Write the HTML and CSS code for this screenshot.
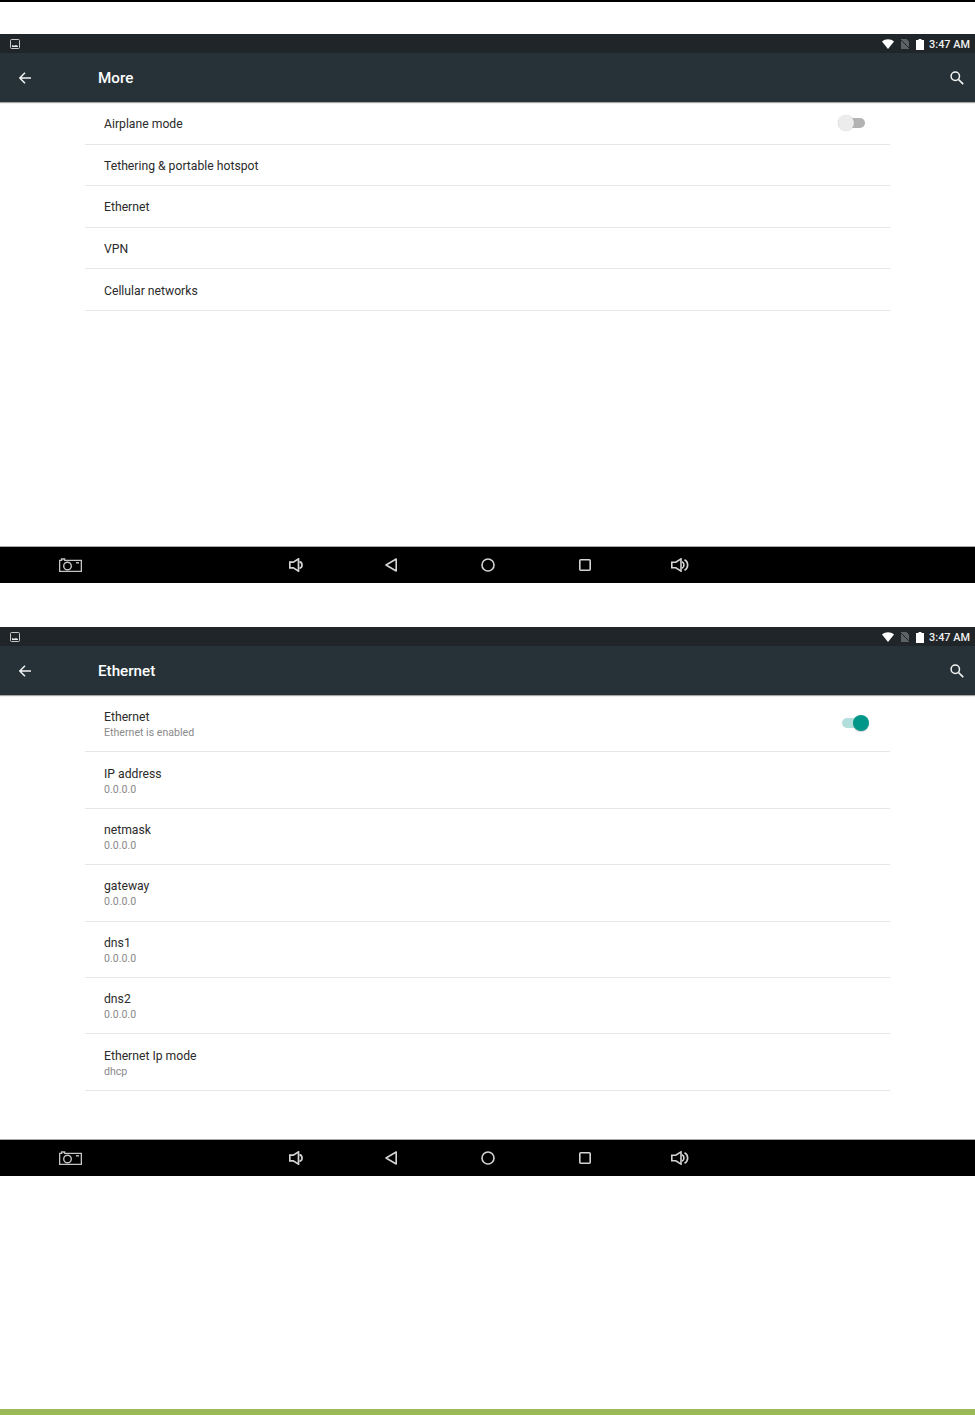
FILE: index.html
```html
<!DOCTYPE html>
<html lang="en">
<head>
    <meta charset="UTF-8">
    <meta name="viewport" content="width=device-width, initial-scale=1.0">
    <title>More and Ethernet settings</title>
    <link rel="stylesheet" href="styles.css">
</head>
<body>
    <div class="top-rule"></div>

    <!-- More screen -->
    <section class="screen">
        <div class="status-bar">
            <svg class="status-pic" viewBox="0 0 10 10"><rect x="0.5" y="0.5" width="9" height="9" rx="1" fill="#1f2528" stroke="#c8c8c8"/><path d="M2 8V6l2 .8L6 6l2 1v1z" fill="#e8e8e8"/></svg>
            <svg class="status-wifi" viewBox="0 0 12 10"><path d="M0 2.6C3.5-.6 8.500-.6 12 2.600L6 10z" fill="#fff"/></svg>
            <svg class="status-sim" viewBox="0 0 8 10"><path d="M0 0h5.500L8 2.500V10H0z" fill="#5c6366"/><path d="M0 1l8 8" stroke="#1f2528"/></svg>
            <svg class="status-battery" viewBox="0 0 8 11"><path d="M2.500 0h3v1H8v10H0V1h2.500z" fill="#fff"/></svg>
            <span class="status-time">3:47 AM</span>
        </div>
        <header class="toolbar">
            <svg class="toolbar-back" viewBox="0 0 12 12"><path d="M12 6H1.200M6 .8L.8 6 6 11.200" fill="none" stroke="#f2f4f4" stroke-width="1.500"/></svg>
            <h1 class="toolbar-title">More</h1>
            <svg class="toolbar-search" viewBox="0 0 14 14"><circle cx="5.300" cy="5.300" r="4.200" fill="none" stroke="#f2f4f4" stroke-width="1.500"/><path d="M8.500 8.500L13.200 13.200" stroke="#f2f4f4" stroke-width="1.700"/></svg>
        </header>
        <ul class="settings-list">
            <li class="row row-single">
                <span class="row-title">Airplane mode</span>
                <span class="switch switch-off"><span class="switch-thumb"></span></span>
            </li>
            <li class="row row-single"><span class="row-title">Tethering &amp; portable hotspot</span></li>
            <li class="row row-single"><span class="row-title">Ethernet</span></li>
            <li class="row row-single"><span class="row-title">VPN</span></li>
            <li class="row row-single"><span class="row-title">Cellular networks</span></li>
        </ul>
        <nav class="nav-bar">
            <svg class="nav-camera" viewBox="0 0 23 14"><path d="M.6 13.400V2.400h2V1h3v1.400h16.800v11z" fill="none" stroke="#c4c4c4" stroke-width="1.400"/><circle cx="8.500" cy="8" r="3.800" fill="none" stroke="#c4c4c4" stroke-width="1.400"/><path d="M17 4.800h3" stroke="#c4c4c4" stroke-width="1.400"/></svg>
            <svg class="nav-vol-down" viewBox="0 0 15 14"><path d="M.8 4.200h3.500L9.500.9v12.200L4.300 9.800H.8z" fill="none" stroke="#d4d4d4" stroke-width="1.700"/><path d="M10.500 3.600c3.400 1 3.400 5.800 0 6.800" fill="none" stroke="#d4d4d4" stroke-width="1.700"/></svg>
            <svg class="nav-back" viewBox="0 0 12 14"><path d="M11.200 1v12L1 7z" fill="none" stroke="#d4d4d4" stroke-width="1.600" stroke-linejoin="round"/></svg>
            <svg class="nav-home" viewBox="0 0 14 14"><circle cx="7" cy="7" r="6" fill="none" stroke="#d4d4d4" stroke-width="1.600"/></svg>
            <svg class="nav-recent" viewBox="0 0 12 12"><rect x=".8" y=".8" width="10.400" height="10.400" rx="1" fill="none" stroke="#d4d4d4" stroke-width="1.600"/></svg>
            <svg class="nav-vol-up" viewBox="0 0 18 14"><path d="M.8 4.200h4L10 .9v12.200L4.800 9.800h-4z" fill="none" stroke="#d4d4d4" stroke-width="1.600"/><path d="M11 3.800c2.600 1 2.600 5.400 0 6.400M13.500 1.800c4.200 2 4.200 8.400 0 10.400" fill="none" stroke="#d4d4d4" stroke-width="1.600"/></svg>
        </nav>
    </section>

    <!-- Ethernet screen -->
    <section class="screen screen-second">
        <div class="status-bar">
            <svg class="status-pic" viewBox="0 0 10 10"><rect x="0.5" y="0.5" width="9" height="9" rx="1" fill="#1f2528" stroke="#c8c8c8"/><path d="M2 8V6l2 .8L6 6l2 1v1z" fill="#e8e8e8"/></svg>
            <svg class="status-wifi" viewBox="0 0 12 10"><path d="M0 2.6C3.5-.6 8.500-.6 12 2.600L6 10z" fill="#fff"/></svg>
            <svg class="status-sim" viewBox="0 0 8 10"><path d="M0 0h5.500L8 2.500V10H0z" fill="#5c6366"/><path d="M0 1l8 8" stroke="#1f2528"/></svg>
            <svg class="status-battery" viewBox="0 0 8 11"><path d="M2.500 0h3v1H8v10H0V1h2.500z" fill="#fff"/></svg>
            <span class="status-time">3:47 AM</span>
        </div>
        <header class="toolbar">
            <svg class="toolbar-back" viewBox="0 0 12 12"><path d="M12 6H1.200M6 .8L.8 6 6 11.200" fill="none" stroke="#f2f4f4" stroke-width="1.500"/></svg>
            <h1 class="toolbar-title">Ethernet</h1>
            <svg class="toolbar-search" viewBox="0 0 14 14"><circle cx="5.300" cy="5.300" r="4.200" fill="none" stroke="#f2f4f4" stroke-width="1.500"/><path d="M8.500 8.500L13.200 13.200" stroke="#f2f4f4" stroke-width="1.700"/></svg>
        </header>
        <ul class="settings-list">
            <li class="row row-double">
                <div class="row-text">
                    <span class="row-title">Ethernet</span>
                    <span class="row-sub">Ethernet is enabled</span>
                </div>
                <span class="switch switch-on"><span class="switch-thumb"></span></span>
            </li>
            <li class="row row-double">
                <div class="row-text"><span class="row-title">IP address</span><span class="row-sub">0.0.0.0</span></div>
            </li>
            <li class="row row-double">
                <div class="row-text"><span class="row-title">netmask</span><span class="row-sub">0.0.0.0</span></div>
            </li>
            <li class="row row-double">
                <div class="row-text"><span class="row-title">gateway</span><span class="row-sub">0.0.0.0</span></div>
            </li>
            <li class="row row-double">
                <div class="row-text"><span class="row-title">dns1</span><span class="row-sub">0.0.0.0</span></div>
            </li>
            <li class="row row-double">
                <div class="row-text"><span class="row-title">dns2</span><span class="row-sub">0.0.0.0</span></div>
            </li>
            <li class="row row-double">
                <div class="row-text"><span class="row-title">Ethernet Ip mode</span><span class="row-sub">dhcp</span></div>
            </li>
        </ul>
        <nav class="nav-bar">
            <svg class="nav-camera" viewBox="0 0 23 14"><path d="M.6 13.400V2.400h2V1h3v1.400h16.800v11z" fill="none" stroke="#c4c4c4" stroke-width="1.400"/><circle cx="8.500" cy="8" r="3.800" fill="none" stroke="#c4c4c4" stroke-width="1.400"/><path d="M17 4.800h3" stroke="#c4c4c4" stroke-width="1.400"/></svg>
            <svg class="nav-vol-down" viewBox="0 0 15 14"><path d="M.8 4.200h3.500L9.500.9v12.200L4.300 9.800H.8z" fill="none" stroke="#d4d4d4" stroke-width="1.700"/><path d="M10.500 3.600c3.400 1 3.400 5.800 0 6.800" fill="none" stroke="#d4d4d4" stroke-width="1.700"/></svg>
            <svg class="nav-back" viewBox="0 0 12 14"><path d="M11.200 1v12L1 7z" fill="none" stroke="#d4d4d4" stroke-width="1.600" stroke-linejoin="round"/></svg>
            <svg class="nav-home" viewBox="0 0 14 14"><circle cx="7" cy="7" r="6" fill="none" stroke="#d4d4d4" stroke-width="1.600"/></svg>
            <svg class="nav-recent" viewBox="0 0 12 12"><rect x=".8" y=".8" width="10.400" height="10.400" rx="1" fill="none" stroke="#d4d4d4" stroke-width="1.600"/></svg>
            <svg class="nav-vol-up" viewBox="0 0 18 14"><path d="M.8 4.200h4L10 .9v12.200L4.800 9.800h-4z" fill="none" stroke="#d4d4d4" stroke-width="1.600"/><path d="M11 3.800c2.600 1 2.600 5.400 0 6.400M13.500 1.800c4.200 2 4.200 8.400 0 10.400" fill="none" stroke="#d4d4d4" stroke-width="1.600"/></svg>
        </nav>
    </section>

    <div class="bottom-rule"></div>
</body>
</html>
```

FILE: styles.css
```css
* {
    box-sizing: border-box;
}
html, body {
    margin: 0;
    padding: 0;
}
body {
    display: flex;
    flex-direction: column;
    height: 1415px;
    background: #fff;
    font-family: Roboto, "Liberation Sans", sans-serif;
    overflow: hidden;
}
.top-rule {
    height: 2px;
    background: #000;
}
.bottom-rule {
    height: 6px;
    margin-top: auto;
    background: #9bb957;
}

.screen {
    display: flex;
    flex-direction: column;
    height: 549px;
    margin-top: 32px;
}
.screen-second {
    margin-top: 44px;
}

/* status bar */
.status-bar {
    display: flex;
    align-items: center;
    height: 19px;
    padding: 1px 5px 0 10px;
    background: #1f2528;
    flex-shrink: 0;
}
.status-pic {
    width: 10px;
    height: 10px;
    margin-right: auto;
}
.status-wifi {
    width: 12px;
    height: 10px;
}
.status-sim {
    width: 8px;
    height: 10px;
    margin-left: 7px;
}
.status-battery {
    width: 8px;
    height: 11px;
    margin-left: 7px;
}
.status-time {
    margin-left: 5px;
    color: #f0f0f0;
    font-size: 10.9px;
    font-weight: 500;
}

/* toolbar */
.toolbar {
    display: flex;
    align-items: center;
    height: 49px;
    padding: 1px 12px 0 19px;
    background: #263238;
    box-shadow: 0 1px 1px rgba(0, 0, 0, 0.35);
    flex-shrink: 0;
}
.toolbar-back {
    width: 12px;
    height: 12px;
}
.toolbar-title {
    margin: 0 auto 0 67px;
    color: #fff;
    font-size: 15.2px;
    font-weight: 500;
}
.toolbar-search {
    width: 14px;
    height: 14px;
    margin-right: -1px;
}

/* list */
.settings-list {
    flex: 1;
    margin: 0 85px;
    padding: 1px 0 0;
    list-style: none;
}
.row {
    display: flex;
    align-items: center;
    justify-content: space-between;
    padding: 0 19px;
    border-bottom: 1px solid #e6e6e6;
}
.row-single {
    height: 41.6px;
    padding-top: 3px;
}
.row-double {
    height: 56.4px;
    padding-top: 2px;
}
.row-text {
    display: flex;
    flex-direction: column;
    gap: 1px;
}
.row-title {
    color: #2b2b2b;
    font-size: 12.2px;
    line-height: 15px;
}
.row-sub {
    color: #8a8a8a;
    font-size: 10.6px;
    line-height: 13px;
}

/* switches */
.switch {
    position: relative;
    display: block;
    height: 10px;
    border-radius: 5px;
}
.switch-thumb {
    position: absolute;
    top: -3px;
    width: 16px;
    height: 16px;
    border-radius: 50%;
}
.switch-off {
    width: 27px;
    margin: -3px 6px 0 0;
    background: #b3b3b3;
}
.switch-off .switch-thumb {
    left: 0;
    background: #ececec;
    box-shadow: 0 0 1px rgba(0, 0, 0, 0.2);
}
.switch-on {
    width: 27px;
    margin: -3px 2px 0 0;
    background: #b2dfdb;
}
.switch-on .switch-thumb {
    right: 0;
    background: #009688;
    box-shadow: 0 1px 1px rgba(0, 0, 0, 0.2);
}

/* nav bar */
.nav-bar {
    display: flex;
    align-items: center;
    height: 37px;
    padding-left: 59px;
    background: #000;
    border-top: 1px solid #a8a8a8;
    flex-shrink: 0;
}
.nav-camera {
    width: 23px;
    height: 14px;
}
.nav-vol-down {
    width: 15px;
    height: 14px;
    margin-left: 207px;
}
.nav-back {
    width: 12px;
    height: 14px;
    margin-left: 81px;
}
.nav-home {
    width: 14px;
    height: 14px;
    margin-left: 84px;
}
.nav-recent {
    width: 12px;
    height: 12px;
    margin-left: 84px;
}
.nav-vol-up {
    width: 18px;
    height: 14px;
    margin-left: 80px;
}
```
